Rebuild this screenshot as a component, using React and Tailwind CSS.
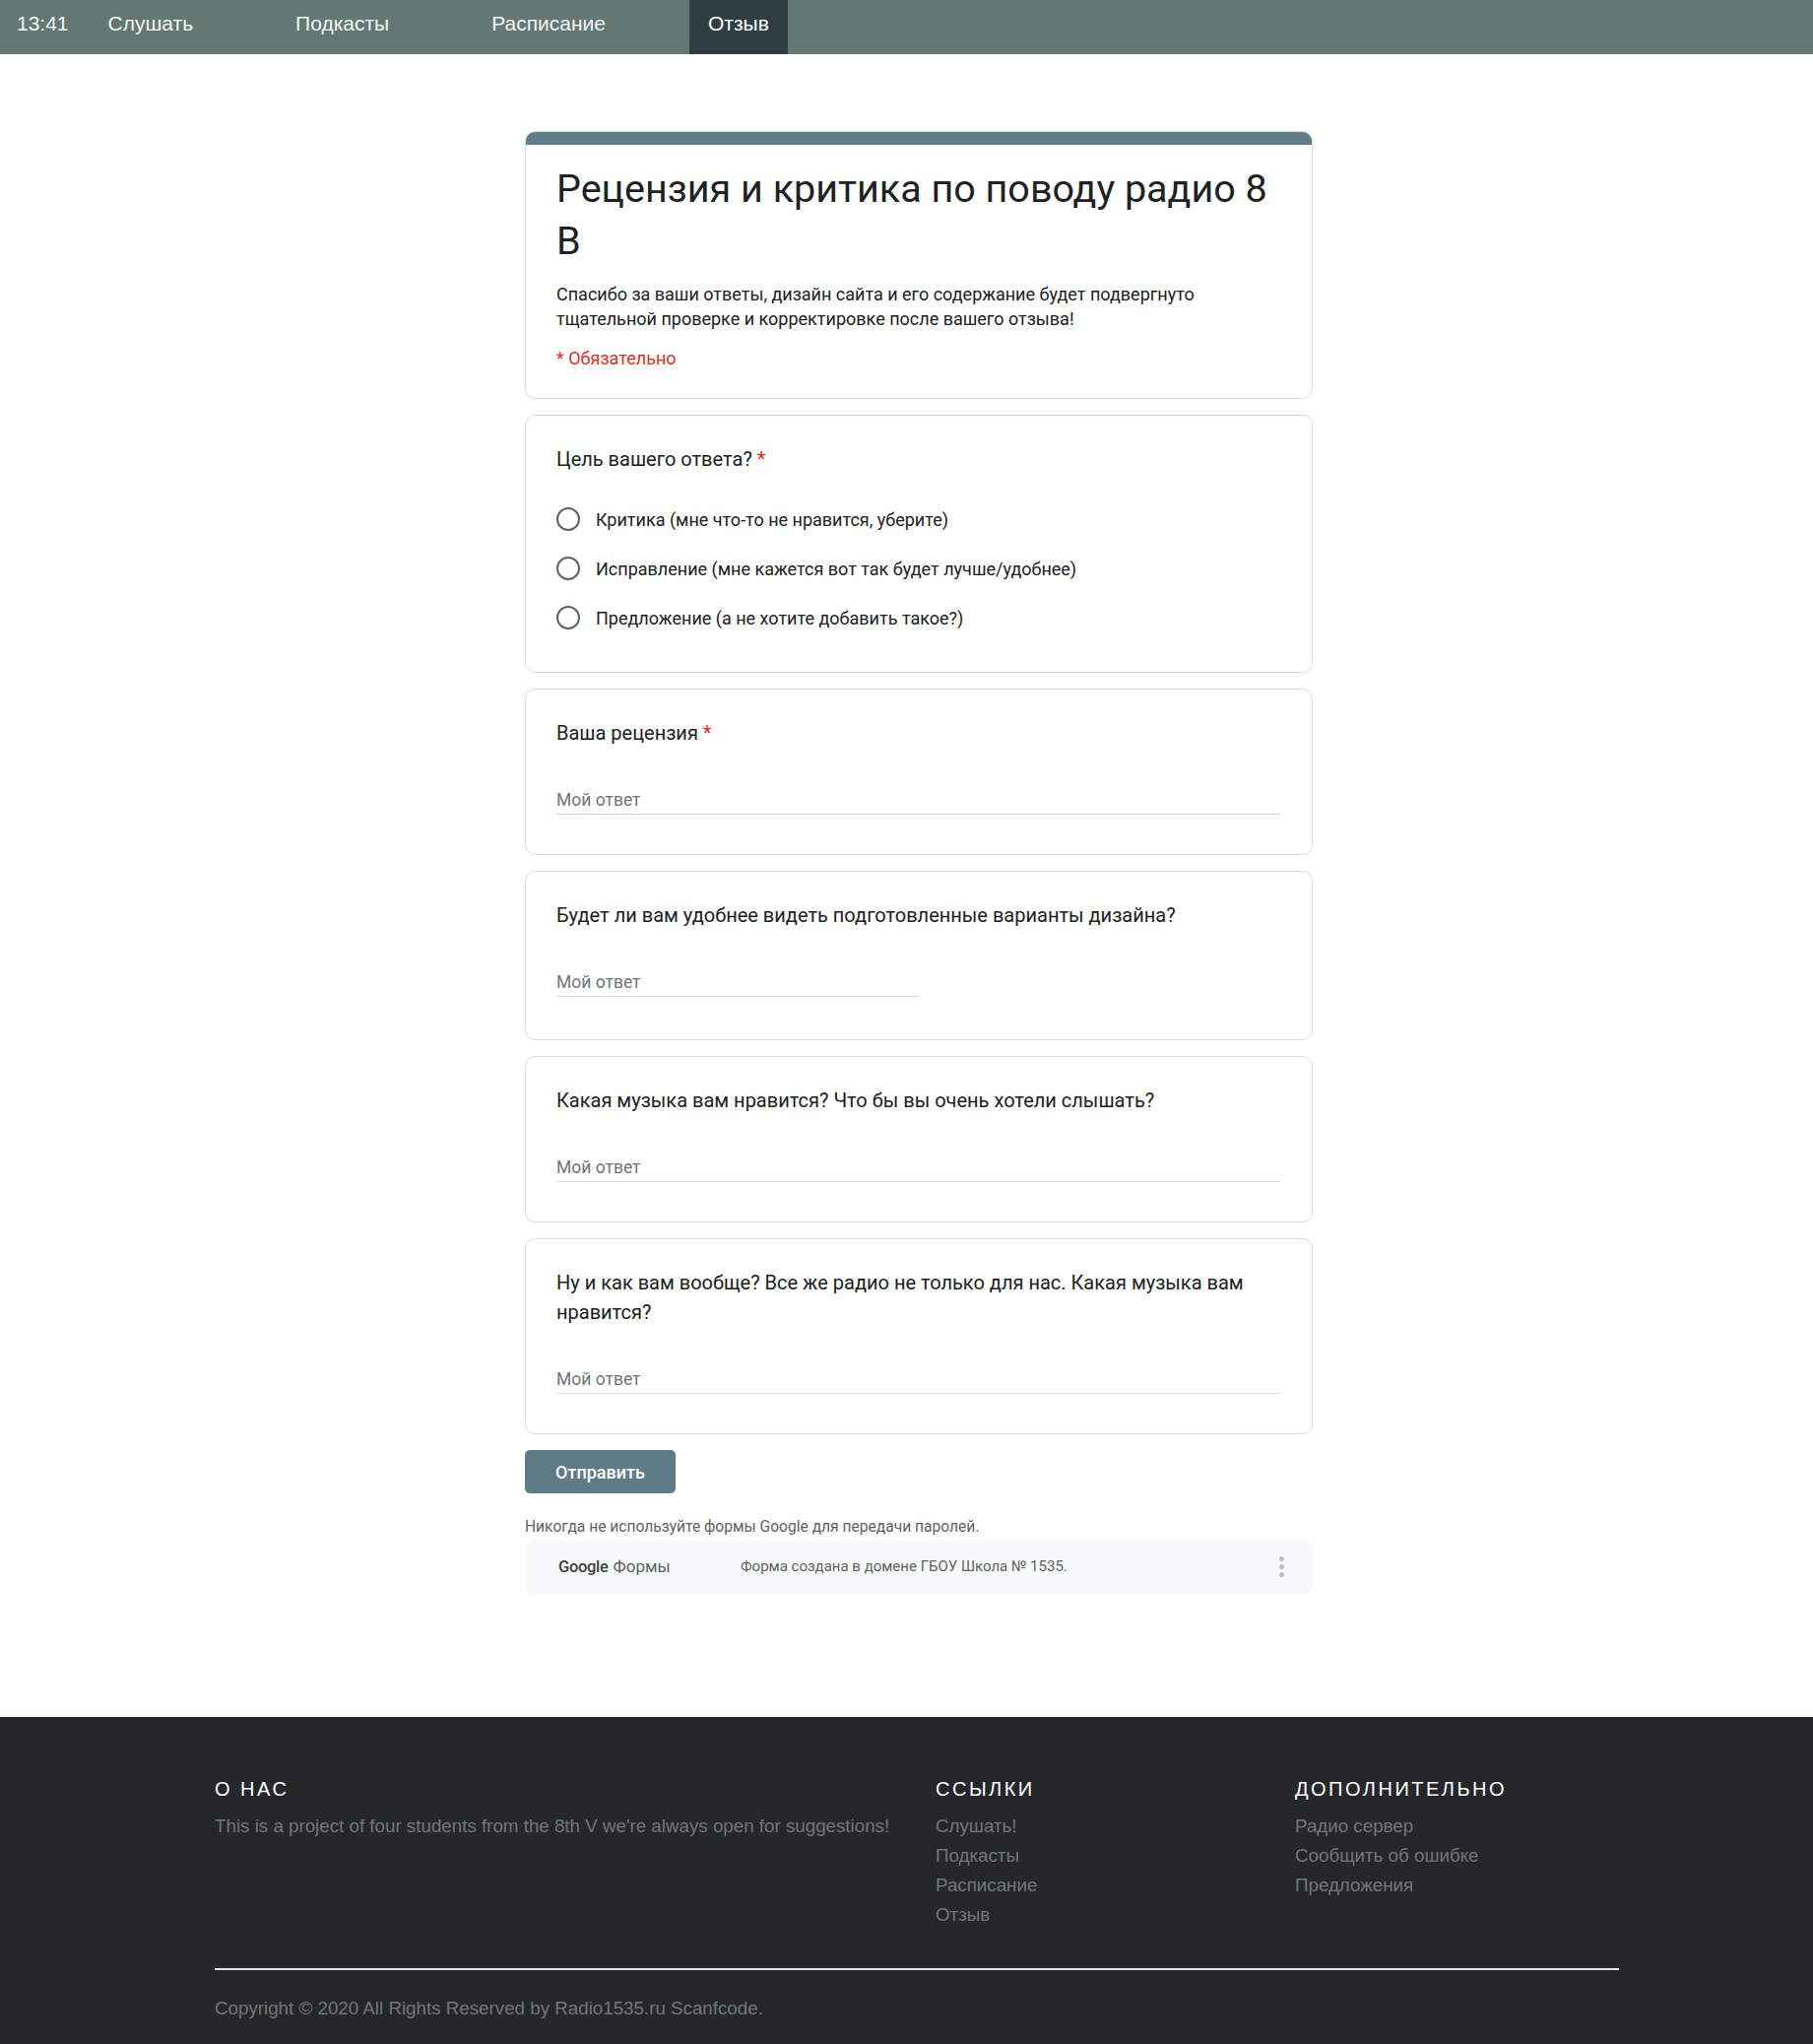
import React from "react";

// --- NAV / FOOTER DATA ---
const navLinks = [
  { label: "Слушать", active: false },
  { label: "Подкасты", active: false },
  { label: "Расписание", active: false },
  { label: "Отзыв", active: true },
];

const footerLinks = ["Слушать!", "Подкасты", "Расписание", "Отзыв"];
const footerExtra = ["Радио сервер", "Сообщить об ошибке", "Предложения"];

const options = [
  "Критика (мне что-то не нравится, уберите)",
  "Исправление (мне кажется вот так будет лучше/удобнее)",
  "Предложение (а не хотите добавить такое?)",
];

function Card({ children }) {
  return (
    <div className="rounded-[10px] border border-[#dadce0] bg-white px-[31px] pt-[29px] pb-[30px]">
      {children}
    </div>
  );
}

function Question({ title, required }) {
  return (
    <div className="text-[20px] leading-[30px] text-[#202124]">
      {title}
      {required && <span className="text-[#d93025]"> *</span>}
    </div>
  );
}

function TextAnswer({ half }) {
  return (
    <div className={half ? "mt-[40px] w-1/2 pb-[13px]" : "mt-[40px] w-full pb-[10px]"}>
      <div className="border-b border-[#dadce0] pb-[1px] text-[17.5px] leading-[26px] text-[#70757a]">
        Мой ответ
      </div>
    </div>
  );
}

export default function App() {
  return (
    <div className="min-h-screen bg-white font-['Liberation_Sans',Arial,sans-serif]">
      {/* ── TOP NAV ── */}
      <nav className="flex h-[55px] bg-[#647873] text-[21px] leading-[24px] text-[#f4f4f4]">
        <span className="pl-[17px] pr-[21px] pt-[12px]">13:41</span>
        {navLinks.map((l) => (
          <a
            key={l.label}
            href="#"
            className={
              l.active
                ? "h-full bg-[#2e3f43] px-[19px] pt-[12px] text-white"
                : "mr-[66px] h-full px-[19px] pt-[12px]"
            }
          >
            {l.label}
          </a>
        ))}
      </nav>

      {/* ── GOOGLE FORM ── */}
      <main className="pt-[78px] pb-[125px] font-['Roboto',sans-serif]">
        <div className="ml-[533px] flex w-[800px] flex-col gap-[16px]">
          {/* header card */}
          <div className="overflow-hidden rounded-[10px] border border-[#dadce0] bg-white">
            <div className="h-[13px] bg-[#607d8b]" />
            <div className="px-[31px] pt-[18px] pb-[28px]">
              <h1 className="text-[39.5px] leading-[53px] text-[#202124]">
                Рецензия и критика по поводу радио 8 В
              </h1>
              <p className="mt-[15px] pr-[40px] text-[18px] leading-[25px] text-[#202124]">
                Спасибо за ваши ответы, дизайн сайта и его содержание будет подвергнуто
                тщательной проверке и корректировке после вашего отзыва!
              </p>
              <div className="mt-[15px] text-[18px] leading-[25px] text-[#d93025]">* Обязательно</div>
            </div>
          </div>

          <Card>
            <Question title="Цель вашего ответа?" required />
            <div className="mt-[21px]">
              {options.map((o) => (
                <label key={o} className="flex h-[50px] items-center">
                  <span className="h-[24px] w-[24px] rounded-full border-2 border-[#5f6368]" />
                  <span className="ml-[16px] text-[18px] leading-[25px] text-[#202124]">{o}</span>
                </label>
              ))}
            </div>
          </Card>

          <Card>
            <Question title="Ваша рецензия" required />
            <TextAnswer />
          </Card>

          <Card>
            <Question title="Будет ли вам удобнее видеть подготовленные варианты дизайна?" />
            <TextAnswer half />
          </Card>

          <Card>
            <Question title="Какая музыка вам нравится? Что бы вы очень хотели слышать?" />
            <TextAnswer />
          </Card>

          <Card>
            <Question title="Ну и как вам вообще? Все же радио не только для нас. Какая музыка вам нравится?" />
            <TextAnswer />
          </Card>

          <div>
            <button className="h-[44px] w-[153px] rounded-[5px] bg-[#5f7b88] text-[18px] font-medium text-white">
              Отправить
            </button>
            <div className="mt-[24px] text-[15.6px] leading-[20px] text-[#5f6368]">
              Никогда не используйте формы Google для передачи паролей.
            </div>
            <div className="mt-[3px] flex h-[55px] items-center rounded-[10px] bg-[#f8f9fa] pl-[34px] pr-[29px]">
              <div className="flex w-[185px] items-baseline gap-[5px]">
                <span className="text-[16.5px] font-medium tracking-[-0.3px] text-[#3c4043]">Google</span>
                <span className="text-[17px] text-[#5f6368]">Формы</span>
              </div>
              <span className="text-[15px] text-[#5f6368]">Форма создана в домене ГБОУ Школа № 1535.</span>
              <div className="ml-auto flex flex-col gap-[3px]">
                <span className="h-[5px] w-[5px] rounded-full bg-[#bdc1c6]" />
                <span className="h-[5px] w-[5px] rounded-full bg-[#bdc1c6]" />
                <span className="h-[5px] w-[5px] rounded-full bg-[#bdc1c6]" />
              </div>
            </div>
          </div>
        </div>
      </main>

      {/* ── FOOTER ── */}
      <footer className="bg-[#26272b] pt-[61px] pb-[25px]">
        <div className="ml-[218px] w-[1426px]">
          <div className="grid grid-cols-[732px_365px_1fr]">
            <div>
              <h4 className="text-[20px] leading-[24px] tracking-[2.5px] text-white">О НАС</h4>
              <p className="mt-[11px] text-[18.75px] leading-[30px] text-[#737578]">
                This is a project of four students from the 8th V we're always open for suggestions!
              </p>
            </div>
            <div>
              <h4 className="text-[20px] leading-[24px] tracking-[2.5px] text-white">ССЫЛКИ</h4>
              <ul className="mt-[11px] text-[18.75px] leading-[30px] text-[#737578]">
                {footerLinks.map((f) => (
                  <li key={f}>{f}</li>
                ))}
              </ul>
            </div>
            <div>
              <h4 className="text-[20px] leading-[24px] tracking-[2.5px] text-white">ДОПОЛНИТЕЛЬНО</h4>
              <ul className="mt-[11px] text-[18.75px] leading-[30px] text-[#737578]">
                {footerExtra.map((f) => (
                  <li key={f}>{f}</li>
                ))}
              </ul>
            </div>
          </div>
          <div className="mt-[39px] h-[2px] bg-[#e6e6e6]" />
          <p className="mt-[27px] text-[18.75px] leading-[24px] text-[#737578]">
            Copyright © 2020 All Rights Reserved by Radio1535.ru Scanfcode.
          </p>
        </div>
      </footer>
    </div>
  );
}
